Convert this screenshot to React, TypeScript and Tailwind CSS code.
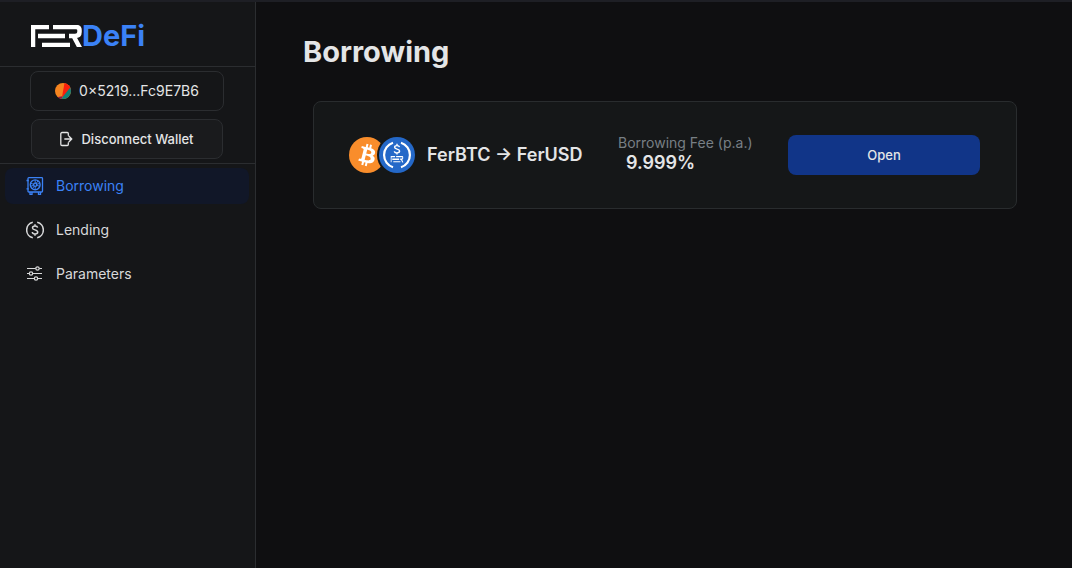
import type { ReactNode } from "react";

const FER_BARS =
  "M2 22V2H18M22 2H45Q48.500 2 48.500 5V7Q48.500 11 44 11H38M42.500 11L49.500 24M7 11H34M11 20H39";

function FerMark() {
  return (
    <svg className="h-[22px] w-[51px]" viewBox="0 0 51 22" fill="none" stroke="#fff" strokeWidth="4.500" aria-hidden="true">
      <path d={FER_BARS} />
    </svg>
  );
}

function AvatarIcon() {
  return (
    <svg className="size-4" viewBox="0 0 16 16" aria-hidden="true">
      <clipPath id="avatar">
        <circle cx="8" cy="8" r="8" />
      </clipPath>
      <g clipPath="url(#avatar)">
        <path fill="#f5841f" d="M0 0h16v16H0z" />
        <path fill="#fb1f0c" d="M9.500 0H16v9L7 14z" />
        <path fill="#0e8378" d="M16 3.500V16H6L10 11z" />
        <path fill="#8c1550" d="M3 14l4.500-.8L6.500 16H3z" />
      </g>
    </svg>
  );
}

function ExitIcon() {
  return (
    <svg className="h-4 w-[13px]" viewBox="2 0 13 16" fill="none" stroke="currentColor" strokeWidth="1.300" strokeLinecap="round" strokeLinejoin="round" aria-hidden="true">
      <path d="M10.300 4.200V2.500a1 1 0 0 0-1-1H4a1.200 1.200 0 0 0-1.200 1.200v10.600A1.200 1.200 0 0 0 4 14.500h5.300a1 1 0 0 0 1-1v-1.700M6.800 8h7M11 5.200 13.800 8 11 10.800" />
    </svg>
  );
}

function SafeIcon() {
  return (
    <svg className="size-[18px]" viewBox="0 0 18 18" fill="none" stroke="currentColor" strokeWidth="1.300" aria-hidden="true">
      <rect x="2" y=".7" width="14.500" height="14.300" rx=".8" />
      <path d="M.5 3.500h2.200M.5 11.800h2.200M4 15v2.300h2V15M12.500 15v2.300h2V15" />
      <circle cx="9.200" cy="7.800" r="4.900" strokeWidth="1.400" />
      <circle cx="9.200" cy="7.800" r="1.600" />
      <path strokeWidth=".9" d="M9.200 3v3.200M9.200 9.400v3.200M4.600 6.300l3.100 1M10.700 8.300l3.100 1M6.400 11.700l1.900-2.600M10.100 6.500 12 3.900M13.800 6.300l-3.100 1M7.700 8.300l-3.100 1" />
    </svg>
  );
}

function CoinIcon() {
  return (
    <svg className="size-[18px]" viewBox="0 0 18 18" fill="none" stroke="currentColor" strokeWidth="1.500" aria-hidden="true">
      <path d="M6.800 1.300a7.900 7.900 0 0 0 0 15.400M11.200 1.300a7.900 7.900 0 0 1 0 15.400" />
      <path d="M11.600 6.700C11.400 5.500 10.400 5 9 5S6.500 5.700 6.500 6.900C6.500 9.500 11.700 8.200 11.700 11c0 1.300-1.200 2-2.700 2s-2.600-.7-2.700-2M9 3.200V5M9 13v1.800" />
    </svg>
  );
}

function SlidersIcon() {
  return (
    <svg className="size-[18px]" viewBox="0 0 18 18" fill="none" stroke="currentColor" strokeWidth="1.200" aria-hidden="true">
      <path d="M1 3.500h8.700M13.300 3.500H16M1 8.500h2.200M6.800 8.500H16M1 13.500h7.200M11.800 13.500H16" />
      <circle cx="11.500" cy="3.500" r="1.700" />
      <circle cx="5" cy="8.500" r="1.700" />
      <circle cx="10" cy="13.500" r="1.700" />
    </svg>
  );
}

function BitcoinIcon() {
  return (
    <svg className="size-9" viewBox="0 0 32 32" aria-hidden="true">
      <circle cx="16" cy="16" r="16" fill="#f98d2b" />
      <path
        fill="#fff"
        d="M23.189 14.02c.314-2.096-1.283-3.223-3.465-3.975l.708-2.84-1.728-.43-.69 2.765c-.454-.114-.92-.22-1.385-.326l.695-2.783L15.596 6l-.708 2.839c-.376-.086-.746-.17-1.104-.26l.002-.009-2.384-.595-.46 1.846s1.283.294 1.256.312c.7.175.826.638.805 1.006l-.806 3.235c.048.012.11.03.18.057l-.183-.045-1.13 4.532c-.086.212-.303.531-.793.41.018.025-1.256-.313-1.256-.313l-.858 1.978 2.25.561c.418.105.828.215 1.231.318l-.715 2.872 1.727.43.708-2.84c.472.127.93.245 1.378.357l-.706 2.828 1.728.43.715-2.866c2.948.558 5.164.333 6.097-2.333.752-2.146-.037-3.385-1.588-4.192 1.13-.26 1.98-1.003 2.207-2.538zm-3.95 5.538c-.533 2.147-4.148.986-5.32.695l.95-3.805c1.172.293 4.929.872 4.37 3.11zm.535-5.569c-.487 1.953-3.495.96-4.47.717l.86-3.45c.975.243 4.118.696 3.61 2.733z"
      />
    </svg>
  );
}

function FerUsdIcon() {
  return (
    <svg className="-ml-2 size-10" viewBox="0 0 40 40" fill="none" stroke="#fff" aria-hidden="true">
      <circle cx="20" cy="20" r="20" fill="#151718" stroke="none" />
      <circle cx="20" cy="20" r="18" fill="#2468c8" stroke="none" />
      <path strokeWidth="2.200" d="M16 7.800a12.800 12.800 0 0 0 0 24.400M24 7.800a12.800 12.800 0 0 1 0 24.400" />
      <path strokeWidth="1.400" d="M22.500 12.200c-.2-1-1.200-1.600-2.500-1.600s-2.400.6-2.400 1.700c0 2.400 5 1.200 5 3.800 0 1.100-1.200 1.800-2.600 1.800s-2.500-.7-2.600-1.700M20 8.800v1.800M20 17.900v1.600" />
      <svg x="13.500" y="21" width="13" height="6.500" viewBox="0 0 51 22" preserveAspectRatio="none">
        <path strokeWidth="4.300" d={FER_BARS} />
      </svg>
    </svg>
  );
}

function NavItem({ icon, label, active = false }: { icon: ReactNode; label: string; active?: boolean }) {
  return (
    <a
      href="#"
      aria-current={active ? "page" : undefined}
      className={
        active
          ? "flex h-9 items-center gap-3 rounded-lg bg-[#111728] pl-[21px] text-[#3b82f6]"
          : "flex h-9 items-center gap-3 rounded-lg pl-[21px] text-[#d8d9da]"
      }
    >
      {icon}
      {label}
    </a>
  );
}

export default function App() {
  return (
    <div className="flex min-h-screen border-t-2 border-[#1e1f25] bg-[#0f0f11] font-['Inter',sans-serif] text-sm text-[#e4e5e6]">
      <aside className="w-64 shrink-0 border-r border-[#2b2d30] bg-[#151618]">
        <header className="flex h-[65px] items-center border-b border-[#2b2d30] pl-[31px]">
          <a href="#" aria-label="FER DeFi" className="flex items-center pt-1">
            <FerMark />
            <span className="text-[29px] leading-8 font-bold text-[#3b82f6]">DeFi</span>
          </a>
        </header>
        <div className="flex flex-col gap-2 border-b border-[#2b2d30] px-[30px] py-1">
          <button type="button" className="flex h-10 w-[194px] items-center justify-center gap-2 rounded-lg border border-[#2b2d30]">
            <AvatarIcon />
            0×5219...Fc9E7B6
          </button>
          <button type="button" className="mx-px flex h-10 w-48 items-center justify-center gap-2 rounded-lg border border-[#2b2d30] bg-[#1a1b1d] text-[13px] font-medium">
            <ExitIcon />
            Disconnect Wallet
          </button>
        </div>
        <nav className="flex flex-col gap-2 py-1 pr-[6px] pl-[5px]">
          <NavItem icon={<SafeIcon />} label="Borrowing" active />
          <NavItem icon={<CoinIcon />} label="Lending" />
          <NavItem icon={<SlidersIcon />} label="Parameters" />
        </nav>
      </aside>
      <main className="flex-1 py-8 pr-[55px] pl-[47px]">
        <h1 className="text-[29px] leading-9 font-bold">Borrowing</h1>
        <section className="mt-[31px] ml-[10px] flex h-[108px] items-center justify-between rounded-lg border border-[#292c2e] bg-[#151718] pr-9 pl-[35px]">
          <div className="flex items-center gap-[10px]">
            <div className="flex items-center">
              <BitcoinIcon />
              <FerUsdIcon />
            </div>
            <h2 className="text-lg font-semibold">FerBTC → FerUSD</h2>
          </div>
          <dl className="pb-1">
            <dt className="leading-5 text-[#787f85]">Borrowing Fee (p.a.)</dt>
            <dd className="pl-2 text-lg leading-5 font-semibold">9.999%</dd>
          </dl>
          <button type="button" className="h-10 w-48 rounded-lg bg-[#113588] text-[13px] font-medium">
            Open
          </button>
        </section>
      </main>
    </div>
  );
}
